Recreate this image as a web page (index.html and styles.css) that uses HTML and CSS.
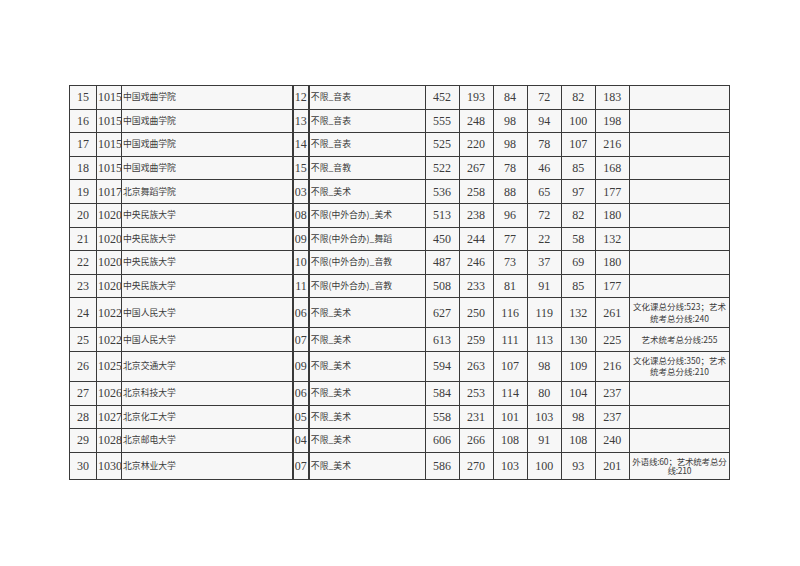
FILE: index.html
```html
<!DOCTYPE html>
<html lang="zh">
<head>
<meta charset="utf-8">
<link rel="stylesheet" href="styles.css">
</head>
<body>
<table class="grid">
<colgroup>
<col style="width:27px"><col style="width:25px"><col style="width:171px"><col style="width:16px"><col style="width:116px">
<col style="width:34px"><col style="width:34px"><col style="width:34px"><col style="width:34px"><col style="width:34px"><col style="width:34px"><col style="width:100px">
</colgroup>
<tbody>
<tr><td class="c">15</td><td class="code">1015</td><td class="zh">中国戏曲学院</td><td class="sub">12</td><td class="zh">不限_音表</td><td class="c">452</td><td class="c">193</td><td class="c">84</td><td class="c">72</td><td class="c">82</td><td class="c">183</td><td class="note"></td></tr>
<tr><td class="c">16</td><td class="code">1015</td><td class="zh">中国戏曲学院</td><td class="sub">13</td><td class="zh">不限_音表</td><td class="c">555</td><td class="c">248</td><td class="c">98</td><td class="c">94</td><td class="c">100</td><td class="c">198</td><td class="note"></td></tr>
<tr><td class="c">17</td><td class="code">1015</td><td class="zh">中国戏曲学院</td><td class="sub">14</td><td class="zh">不限_音表</td><td class="c">525</td><td class="c">220</td><td class="c">98</td><td class="c">78</td><td class="c">107</td><td class="c">216</td><td class="note"></td></tr>
<tr><td class="c">18</td><td class="code">1015</td><td class="zh">中国戏曲学院</td><td class="sub">15</td><td class="zh">不限_音教</td><td class="c">522</td><td class="c">267</td><td class="c">78</td><td class="c">46</td><td class="c">85</td><td class="c">168</td><td class="note"></td></tr>
<tr><td class="c">19</td><td class="code">1017</td><td class="zh">北京舞蹈学院</td><td class="sub">03</td><td class="zh">不限_美术</td><td class="c">536</td><td class="c">258</td><td class="c">88</td><td class="c">65</td><td class="c">97</td><td class="c">177</td><td class="note"></td></tr>
<tr><td class="c">20</td><td class="code">1020</td><td class="zh">中央民族大学</td><td class="sub">08</td><td class="zh">不限(中外合办)_美术</td><td class="c">513</td><td class="c">238</td><td class="c">96</td><td class="c">72</td><td class="c">82</td><td class="c">180</td><td class="note"></td></tr>
<tr><td class="c">21</td><td class="code">1020</td><td class="zh">中央民族大学</td><td class="sub">09</td><td class="zh">不限(中外合办)_舞蹈</td><td class="c">450</td><td class="c">244</td><td class="c">77</td><td class="c">22</td><td class="c">58</td><td class="c">132</td><td class="note"></td></tr>
<tr><td class="c">22</td><td class="code">1020</td><td class="zh">中央民族大学</td><td class="sub">10</td><td class="zh">不限(中外合办)_音教</td><td class="c">487</td><td class="c">246</td><td class="c">73</td><td class="c">37</td><td class="c">69</td><td class="c">180</td><td class="note"></td></tr>
<tr><td class="c">23</td><td class="code">1020</td><td class="zh">中央民族大学</td><td class="sub">11</td><td class="zh">不限(中外合办)_音教</td><td class="c">508</td><td class="c">233</td><td class="c">81</td><td class="c">91</td><td class="c">85</td><td class="c">177</td><td class="note"></td></tr>
<tr class="tall"><td class="c">24</td><td class="code">1022</td><td class="zh">中国人民大学</td><td class="sub">06</td><td class="zh">不限_美术</td><td class="c">627</td><td class="c">250</td><td class="c">116</td><td class="c">119</td><td class="c">132</td><td class="c">261</td><td class="note">文化课总分线:523；艺术统考总分线:240</td></tr>
<tr><td class="c">25</td><td class="code">1022</td><td class="zh">中国人民大学</td><td class="sub">07</td><td class="zh">不限_美术</td><td class="c">613</td><td class="c">259</td><td class="c">111</td><td class="c">113</td><td class="c">130</td><td class="c">225</td><td class="note">艺术统考总分线:255</td></tr>
<tr class="tall"><td class="c">26</td><td class="code">1025</td><td class="zh">北京交通大学</td><td class="sub">09</td><td class="zh">不限_美术</td><td class="c">594</td><td class="c">263</td><td class="c">107</td><td class="c">98</td><td class="c">109</td><td class="c">216</td><td class="note">文化课总分线:350；艺术统考总分线:210</td></tr>
<tr><td class="c">27</td><td class="code">1026</td><td class="zh">北京科技大学</td><td class="sub">06</td><td class="zh">不限_美术</td><td class="c">584</td><td class="c">253</td><td class="c">114</td><td class="c">80</td><td class="c">104</td><td class="c">237</td><td class="note"></td></tr>
<tr><td class="c">28</td><td class="code">1027</td><td class="zh">北京化工大学</td><td class="sub">05</td><td class="zh">不限_美术</td><td class="c">558</td><td class="c">231</td><td class="c">101</td><td class="c">103</td><td class="c">98</td><td class="c">237</td><td class="note"></td></tr>
<tr><td class="c">29</td><td class="code">1028</td><td class="zh">北京邮电大学</td><td class="sub">04</td><td class="zh">不限_美术</td><td class="c">606</td><td class="c">266</td><td class="c">108</td><td class="c">91</td><td class="c">108</td><td class="c">240</td><td class="note"></td></tr>
<tr class="last"><td class="c">30</td><td class="code">1030</td><td class="zh">北京林业大学</td><td class="sub">07</td><td class="zh">不限_美术</td><td class="c">586</td><td class="c">270</td><td class="c">103</td><td class="c">100</td><td class="c">93</td><td class="c">201</td><td class="note tight">外语线:60；艺术统考总分线:210</td></tr>
</tbody>
</table>
</body>
</html>
```
FILE: styles.css
```css
html, body {
  margin: 0;
  padding: 0;
  background: #ffffff;
}
body {
  padding: 85px 0 0 69px;
  font-family: "Liberation Serif", "Noto Sans CJK SC", serif;
  color: #3c3c3c;
}
.grid {
  border-collapse: collapse;
  table-layout: fixed;
  width: 661px;
  background: #f7f7f7;
}
.grid td {
  border: 1px solid #3a3a3a;
  height: 22.6px;
  padding: 0;
  font-size: 12px;
  line-height: 14px;
  vertical-align: middle;
  white-space: nowrap;
  overflow: hidden;
}
.grid td.c { text-align: center; }
.grid td.code { text-align: left; padding-left: 1px; }
.grid td.sub { text-align: right; padding-right: 1px; border-left-width: 2px; border-right-width: 2px; }
.grid td.zh {
  font-family: "Noto Sans CJK SC", sans-serif;
  font-size: 8.8px;
  text-align: left;
  padding-left: 1px;
}
.grid td.note {
  font-family: "Noto Sans CJK SC", sans-serif;
  font-size: 8.5px;
  line-height: 11.5px;
  text-align: center;
  white-space: normal;
  padding: 0 2px;
}
.grid td.note.tight { line-height: 9px; padding: 0; letter-spacing: -0.2px; }
.grid tr.tall td { height: 29px; }
.grid tr.last td { height: 26px; }
```
